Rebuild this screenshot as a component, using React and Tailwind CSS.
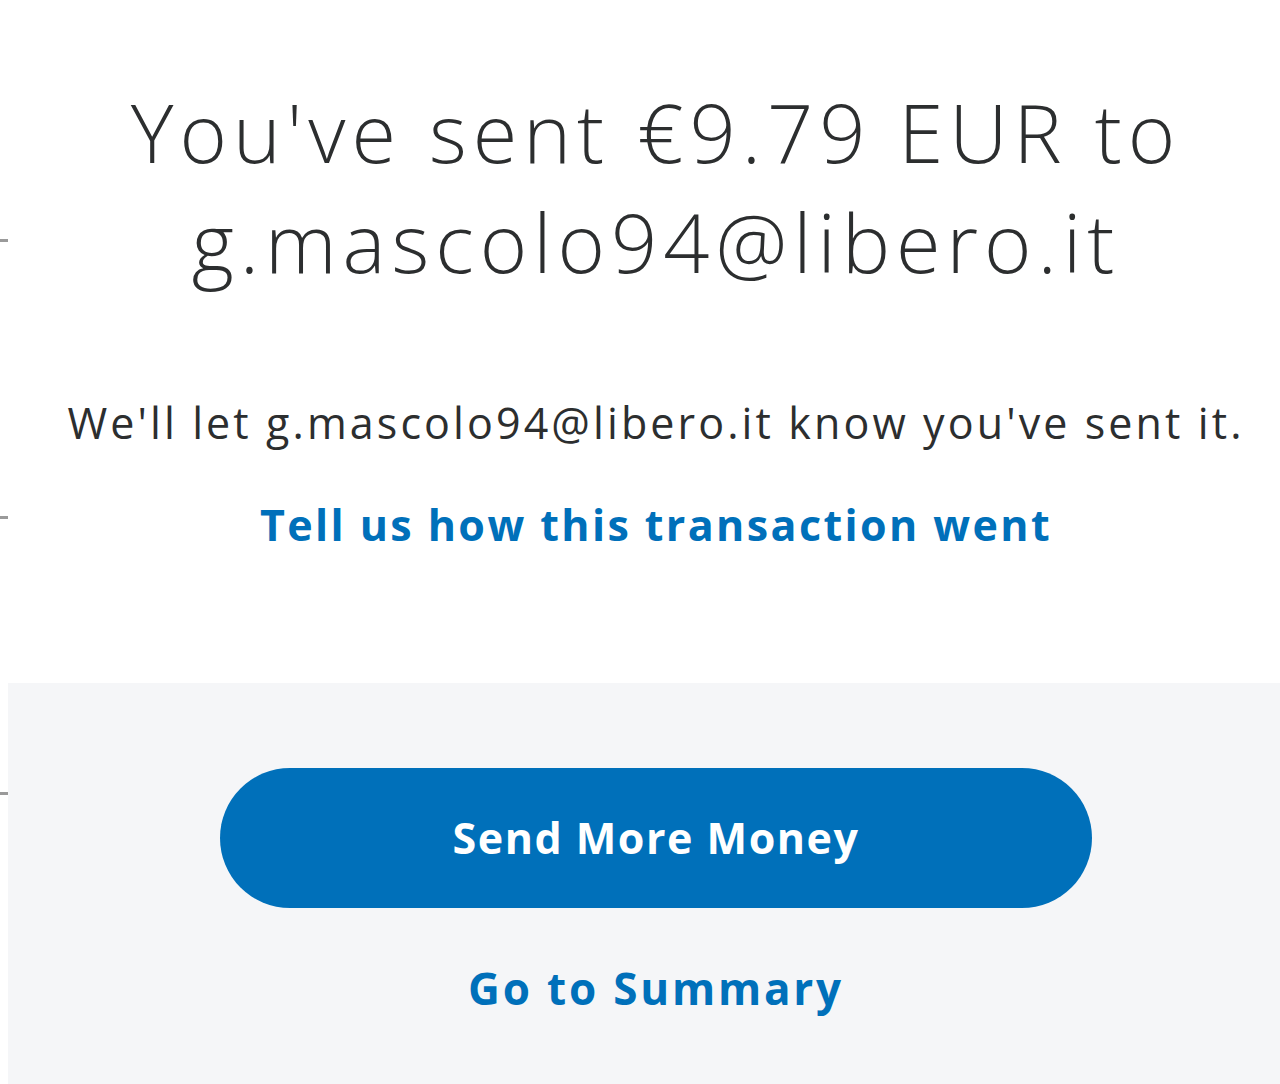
import React from "react";

export default function App() {
  return (
    <div className="flex w-[1280px] h-[1084px] bg-white overflow-hidden" style={{ fontFamily: '"Open Sans", "Noto Sans", sans-serif' }}>
      {/* left gutter with ticks */}
      <div className="w-[8px] shrink-0 flex flex-col">
        <div className="h-[239px]" />
        <div className="h-[3px] w-[8px] bg-[#9a9a9a]" />
        <div className="h-[274px]" />
        <div className="h-[3px] w-[8px] bg-[#9a9a9a]" />
        <div className="h-[273px]" />
        <div className="h-[3px] w-[8px] bg-[#9a9a9a]" />
      </div>
      <div className="flex-1 flex flex-col">
        <div className="h-[683px] shrink-0 flex flex-col items-center pl-[24px] pt-[77px] text-[#2c2e2f]">
          <h1 className="text-[81px] leading-[110px] font-light text-center tracking-[6px]">
            You've sent €9.79 EUR to
            <br />
            g.mascolo94@libero.it
          </h1>
          <p className="mt-[98px] text-[43px] leading-[56px] text-center tracking-[3.1px]">
            We'll let g.mascolo94@libero.it know you've sent it.
          </p>
          <a className="mt-[46px] text-[43px] leading-[56px] font-bold text-[#0070ba] tracking-[2.4px]">
            Tell us how this transaction went
          </a>
        </div>
        <div className="flex-1 bg-[#f5f6f8] flex flex-col items-center pl-[24px] pt-[85px]">
          <button className="w-[872px] h-[140px] rounded-full bg-[#0070ba] text-white text-[43px] font-bold tracking-[1.5px]">
            Send More Money
          </button>
          <a className="mt-[52px] text-[44px] leading-[56px] font-bold text-[#0070ba] tracking-[2.8px]">
            Go to Summary
          </a>
        </div>
      </div>
    </div>
  );
}
